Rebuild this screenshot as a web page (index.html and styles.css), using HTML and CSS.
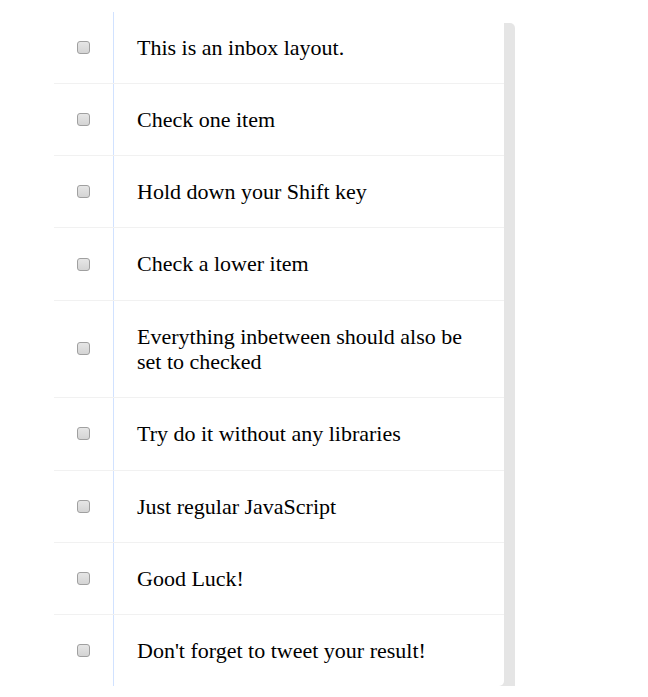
FILE: index.html
```html
<!DOCTYPE html>
<html>
<head>
<meta charset="utf-8">
<link rel="stylesheet" href="styles.css">
</head>
<body>
<div class="inbox">
  <div class="item"><input type="checkbox"><p>This is an inbox layout.</p></div>
  <div class="item"><input type="checkbox"><p>Check one item</p></div>
  <div class="item"><input type="checkbox"><p>Hold down your Shift key</p></div>
  <div class="item"><input type="checkbox"><p>Check a lower item</p></div>
  <div class="item"><input type="checkbox"><p>Everything inbetween should also be set to checked</p></div>
  <div class="item"><input type="checkbox"><p>Try do it without any libraries</p></div>
  <div class="item"><input type="checkbox"><p>Just regular JavaScript</p></div>
  <div class="item"><input type="checkbox"><p>Good Luck!</p></div>
  <div class="item"><input type="checkbox"><p>Don't forget to tweet your result!</p></div>
</div>
</body>
</html>
```
FILE: styles.css
```css
html {
  background: #ffffff;
}
body {
  margin: 0;
  padding-top: 11.5px;
  font-family: "Liberation Serif", "Times New Roman", serif;
}
.inbox {
  width: 450px;
  margin: 0 0 0 54px;
  background: #ffffff;
  border-radius: 5px;
  box-shadow: 11px 11px 0 rgba(0, 0, 0, 0.1);
}
.item {
  display: flex;
  align-items: center;
  border-bottom: 1px solid #f1f1f1;
}
.item:last-child {
  border-bottom: 0;
}
.item input[type="checkbox"] {
  -webkit-appearance: none;
  appearance: none;
  width: 13px;
  height: 13px;
  margin: 0 23px;
  box-sizing: border-box;
  border: 1px solid #a0a0a0;
  border-radius: 3px;
  background: linear-gradient(#e6e6e6, #d4d4d4);
  flex: none;
}
.item p {
  margin: 0;
  padding: 23px;
  flex: 1;
  font-size: 22px;
  line-height: 25.3px;
  color: #000;
  border-left: 1px solid #d1e2ff;
}
```
